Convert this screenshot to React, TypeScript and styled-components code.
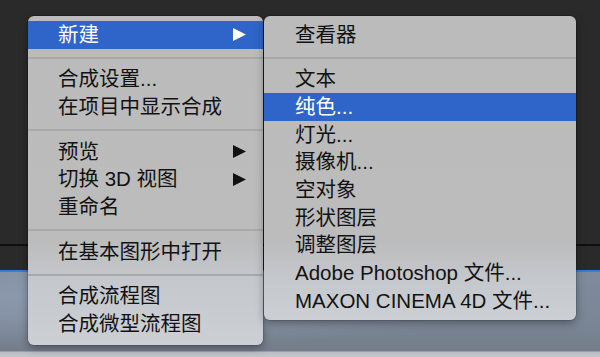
import React from 'react';
import styled, { createGlobalStyle } from 'styled-components';

const Global = createGlobalStyle`
  html, body { margin: 0; padding: 0; }
  body {
    width: 600px;
    height: 357px;
    overflow: hidden;
    background: #282828;
    font-family: "Liberation Sans", "Noto Sans CJK SC", sans-serif;
  }
`;

const Stage = styled.div`
  position: relative;
  width: 600px;
  height: 357px;
  display: flex;
  flex-direction: column;
`;

const DarkPanel = styled.div<{ $h: number }>`
  height: ${p => p.$h}px;
  background: #2a2a2a;
  flex: none;
`;

const Rule = styled.div<{ $color: string }>`
  height: 2px;
  background: ${p => p.$color};
  flex: none;
`;

const Sky = styled.div`
  flex: 1;
  background:
    radial-gradient(ellipse at 15% 30%, rgba(150, 165, 188, 0.65), transparent 60%),
    linear-gradient(180deg, #7f8b9c 0%, #7a8595 60%, #747d89 93%, #b9bdc4 94%, #c3c7cd 100%);
`;

const Menu = styled.div<{ $left: number; $width: number; $pb: number }>`
  position: absolute;
  top: 16px;
  left: ${p => p.$left}px;
  width: ${p => p.$width}px;
  padding: 5px 0 ${p => p.$pb}px;
  border-radius: 6px;
  background: linear-gradient(180deg, #bbbbbb 0px, #bcbcbc 225px, #c4c7cc 262px, #ccd0d5 100%);
  box-shadow: 0 3px 8px rgba(0, 0, 0, 0.35), 0 0 0 0.5px rgba(0, 0, 0, 0.25);
  overflow: hidden;
`;

const Row = styled.div<{ $active?: boolean; $indent: number }>`
  height: 27.7px;
  display: flex;
  align-items: center;
  padding: 0 17px 0 ${p => p.$indent}px;
  font-size: 20.5px;
  color: ${p => (p.$active ? '#ffffff' : '#121212')};
  background: ${p => (p.$active ? '#2f65c9' : 'transparent')};
  white-space: nowrap;
`;

const Label = styled.span`
  flex: 1;
  line-height: 1;
`;

const Separator = styled.div`
  height: 17px;
  display: flex;
  align-items: center;
  &::after {
    content: '';
    display: block;
    width: 100%;
    height: 2px;
    margin-top: 1px;
    background: #a9a9a9;
  }
`;

const Arrow = ({ color }: { color: string }) => (
  <svg width="13" height="13" viewBox="0 0 13 13">
    <polygon points="0,0 13,6.5 0,13" fill={color} />
  </svg>
);

type Item = { label: string; sub?: boolean; active?: boolean } | 'sep';

const mainItems: Item[] = [
  { label: '新建', sub: true, active: true },
  'sep',
  { label: '合成设置...' },
  { label: '在项目中显示合成' },
  'sep',
  { label: '预览', sub: true },
  { label: '切换 3D 视图', sub: true },
  { label: '重命名' },
  'sep',
  { label: '在基本图形中打开' },
  'sep',
  { label: '合成流程图' },
  { label: '合成微型流程图' },
];

const subItems: Item[] = [
  { label: '查看器' },
  'sep',
  { label: '文本' },
  { label: '纯色...', active: true },
  { label: '灯光...' },
  { label: '摄像机...' },
  { label: '空对象' },
  { label: '形状图层' },
  { label: '调整图层' },
  { label: 'Adobe Photoshop 文件...' },
  { label: 'MAXON CINEMA 4D 文件...' },
];

const MenuList = ({ items, indent }: { items: Item[]; indent: number }) => (
  <>
    {items.map((it, i) =>
      it === 'sep' ? (
        <Separator key={i} />
      ) : (
        <Row key={i} $active={it.active} $indent={indent}>
          <Label>{it.label}</Label>
          {it.sub && <Arrow color={it.active ? '#ffffff' : '#111111'} />}
        </Row>
      )
    )}
  </>
);

export default function App() {
  return (
    <Stage>
      <Global />
      <DarkPanel $h={244} />
      <Rule $color="#0e0e0e" />
      <DarkPanel $h={24} />
      <Rule $color="#3a78dc" />
      <Sky />

      <Menu $left={28} $width={235} $pb={7}>
        <MenuList items={mainItems} indent={30} />
      </Menu>
      <Menu $left={264} $width={312} $pb={5}>
        <MenuList items={subItems} indent={31} />
      </Menu>
    </Stage>
  );
}
